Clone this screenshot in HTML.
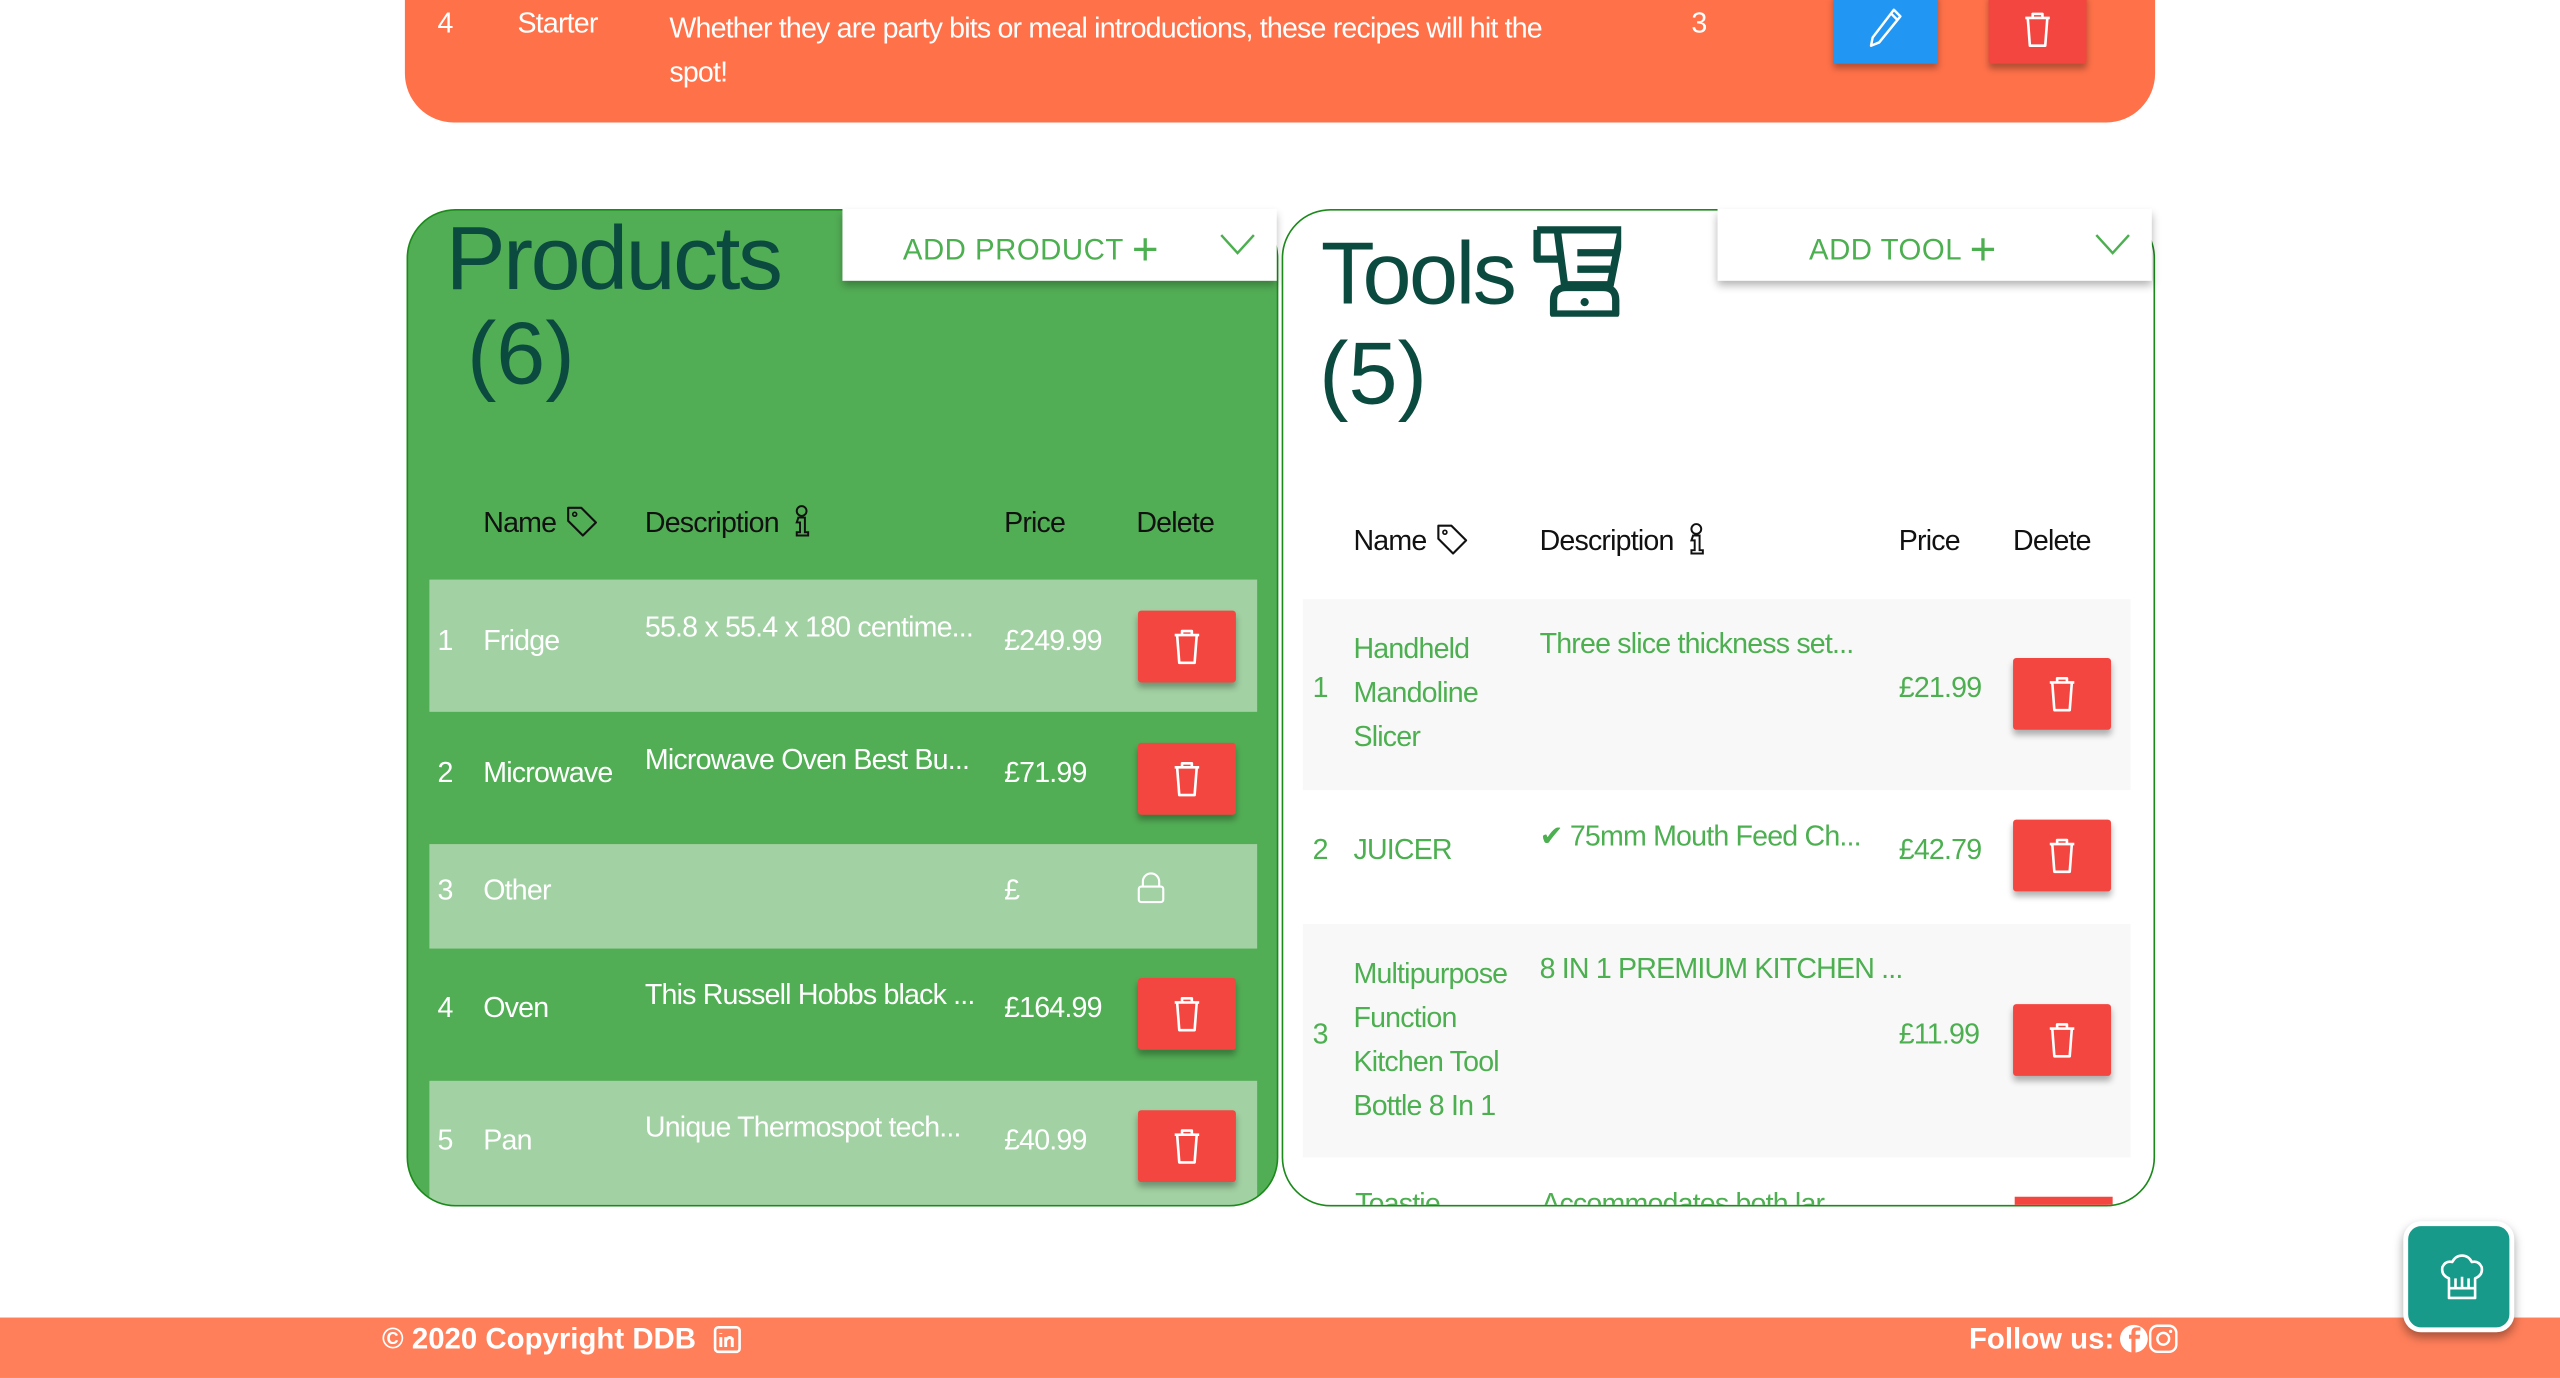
<!DOCTYPE html>
<html><head><meta charset="utf-8">
<style>
html,body{margin:0;padding:0;width:2560px;height:1378px;overflow:hidden;background:#fff;}
#w{position:absolute;left:0;top:0;width:1568px;height:844px;transform:scale(1.632653);transform-origin:0 0;font-family:"Liberation Sans",sans-serif;}
.a{position:absolute;white-space:nowrap;}
.t{font-size:17.5px;letter-spacing:-0.5px;}
.wt{color:#fff}
.gt{color:#4caf50}
.dk{color:#111}
.btn{position:absolute;width:60px;height:44px;background:#f44640;border-radius:2px;box-shadow:0 3px 4px rgba(0,0,0,.3);}
.btn svg{position:absolute;left:20px;top:10px}
.row{position:absolute;}
.dd{position:absolute;background:#fff;box-shadow:0 3px 5px rgba(0,0,0,.3);height:44px;}
.dd .l{position:absolute;top:15px;color:#4caf50;font-size:18px;letter-spacing:.3px}
</style></head><body><div id="w">
<svg width="0" height="0" style="position:absolute"><defs>
<symbol id="bin" viewBox="0 0 20 24"><path d="M2.5 5h15M7 5V2.5h6V5M4 5l1.3 17h9.4L16 5" fill="none" stroke="#fff" stroke-width="1.6" stroke-linejoin="round"/></symbol>
</defs></svg>

<div class="a" style="left:248px;top:-40px;width:1072px;height:115px;background:#ff7149;border-radius:0 0 30px 30px"></div>
<div class="a t wt" style="left:268px;top:4px">4</div>
<div class="a t wt" style="left:317px;top:4px">Starter</div>
<div class="a t wt" style="left:410px;top:4px;white-space:normal;width:560px;line-height:27px">Whether they are party bits or meal introductions, these recipes will hit the spot!</div>
<div class="a t wt" style="left:1036px;top:4px">3</div>
<div class="a" style="left:1123px;top:-4px;width:64px;height:43px;background:#2196f3;box-shadow:0 3px 4px rgba(0,0,0,.3)"><svg style="position:absolute;left:20px;top:8px" width="24" height="26" viewBox="0 0 24 26"><path d="M17 2l4 4L8 22l-5 2 1-5z M15 4l4 4" fill="none" stroke="#fff" stroke-width="1.5" stroke-linejoin="round"/></svg></div>
<div class="btn" style="left:1218px;top:-4px;height:43px"><svg width="20" height="24"><use href="#bin"/></svg></div>

<div class="a" style="left:249px;top:128px;width:532px;height:609px;background:#52ae55;border:1px solid #1b8a1b;border-radius:30px;overflow:hidden">
 <div class="row" style="left:13px;top:226px;width:507px;height:81px;background:#a2d1a3"></div>
 <div class="row" style="left:13px;top:388px;width:507px;height:64px;background:#a2d1a3"></div>
 <div class="row" style="left:13px;top:533px;width:507px;height:90px;background:#a2d1a3"></div>
</div>
<div class="a" style="left:273px;top:126px;font-size:55px;color:#0b4a3f;letter-spacing:-1.5px">Products</div>
<div class="a" style="left:286px;top:186px;font-size:54px;color:#0b4a3f">(6)</div>
<div class="dd" style="left:516px;top:128px;width:266px"><span class="l" style="left:37px">ADD PRODUCT <span style="font-size:28px;position:relative;top:3px;line-height:0">+</span></span>
<svg style="position:absolute;left:231px;top:15px" width="22" height="14" viewBox="0 0 22 14"><path d="M1 1l10 11L21 1" fill="none" stroke="#4caf50" stroke-width="1.5"/></svg></div>

<div class="a t dk" style="left:296px;top:310px">Name</div>
<svg class="a" style="left:346px;top:309px" width="21" height="21" viewBox="0 0 21 21"><path d="M2 2h8l9 9-8 8-9-9z" fill="none" stroke="#111" stroke-width="1.3" stroke-linejoin="round"/><circle cx="6" cy="6" r="1.2" fill="none" stroke="#111"/></svg>
<div class="a t dk" style="left:395px;top:310px">Description</div>
<svg class="a" style="left:486px;top:309px" width="10" height="20" viewBox="0 0 10 20"><circle cx="5" cy="4" r="3" fill="none" stroke="#111" stroke-width="1.2"/><path d="M3 8h4v9h2v2H2v-2h2v-6H2z" fill="none" stroke="#111" stroke-width="1.2"/></svg>
<div class="a t dk" style="left:615px;top:310px">Price</div>
<div class="a t dk" style="left:696px;top:310px">Delete</div>

<div class="a t wt" style="left:268px;top:382px">1</div><div class="a t wt" style="left:296px;top:382px">Fridge</div><div class="a t wt" style="left:395px;top:374px">55.8 x 55.4 x 180 centime...</div><div class="a t wt" style="left:615px;top:382px">£249.99</div>
<div class="btn" style="left:697px;top:374px"><svg width="20" height="24"><use href="#bin"/></svg></div>
<div class="a t wt" style="left:268px;top:463px">2</div><div class="a t wt" style="left:296px;top:463px">Microwave</div><div class="a t wt" style="left:395px;top:455px">Microwave Oven Best Bu...</div><div class="a t wt" style="left:615px;top:463px">£71.99</div>
<div class="btn" style="left:697px;top:455px"><svg width="20" height="24"><use href="#bin"/></svg></div>
<div class="a t wt" style="left:268px;top:535px">3</div><div class="a t wt" style="left:296px;top:535px">Other</div><div class="a t wt" style="left:615px;top:535px">£</div>
<svg class="a" style="left:696px;top:534px" width="18" height="20" viewBox="0 0 18 20"><path d="M4 9V6a5 5 0 0 1 10 0v3" fill="none" stroke="#fff" stroke-width="1.3"/><rect x="1.5" y="9" width="15" height="9.5" rx="1.5" fill="none" stroke="#fff" stroke-width="1.3"/></svg>
<div class="a t wt" style="left:268px;top:607px">4</div><div class="a t wt" style="left:296px;top:607px">Oven</div><div class="a t wt" style="left:395px;top:599px">This Russell Hobbs black ...</div><div class="a t wt" style="left:615px;top:607px">£164.99</div>
<div class="btn" style="left:697px;top:599px"><svg width="20" height="24"><use href="#bin"/></svg></div>
<div class="a t wt" style="left:268px;top:688px">5</div><div class="a t wt" style="left:296px;top:688px">Pan</div><div class="a t wt" style="left:395px;top:680px">Unique Thermospot tech...</div><div class="a t wt" style="left:615px;top:688px">£40.99</div>
<div class="btn" style="left:697px;top:680px"><svg width="20" height="24"><use href="#bin"/></svg></div>

<div class="a" style="left:785px;top:128px;width:533px;height:609px;background:#fff;border:1px solid #1b8a1b;border-radius:30px;overflow:hidden">
 <div class="row" style="left:12px;top:238px;width:507px;height:117px;background:#f8f8f8"></div>
 <div class="row" style="left:12px;top:437px;width:507px;height:143px;background:#f8f8f8"></div>
 <div class="a t gt" style="left:44px;top:598px">Toastie</div>
 <div class="a t gt" style="left:158px;top:598px">Accommodates both lar...</div>
 <div class="a" style="left:448px;top:604px;width:60px;height:40px;background:#f44640"></div>
</div>
<div class="a" style="left:809px;top:137px;font-size:54px;color:#0b4a3f;letter-spacing:-1.5px">Tools</div>
<svg class="a" style="left:937px;top:138px" width="56" height="56" viewBox="0 0 100 100"><path d="M8 5h92l-12 60H38L30 5" fill="none" stroke="#0b4a3f" stroke-width="8" stroke-linejoin="round"/><path d="M8 5v32h26" fill="none" stroke="#0b4a3f" stroke-width="8" stroke-linejoin="round"/><path d="M52 30h40M52 48h36" stroke="#0b4a3f" stroke-width="8"/><path d="M26 97V82q0-14 14-14h40q14 0 14 14v15z" fill="none" stroke="#0b4a3f" stroke-width="8" stroke-linejoin="round"/><circle cx="60" cy="84" r="4.5" fill="#0b4a3f"/></svg>
<div class="a" style="left:808px;top:198px;font-size:54px;color:#0b4a3f">(5)</div>
<div class="dd" style="left:1052px;top:128px;width:266px"><span class="l" style="left:56px">ADD TOOL <span style="font-size:28px;position:relative;top:3px;line-height:0">+</span></span>
<svg style="position:absolute;left:231px;top:15px" width="22" height="14" viewBox="0 0 22 14"><path d="M1 1l10 11L21 1" fill="none" stroke="#4caf50" stroke-width="1.5"/></svg></div>

<div class="a t dk" style="left:829px;top:321px">Name</div>
<svg class="a" style="left:879px;top:320px" width="21" height="21" viewBox="0 0 21 21"><path d="M2 2h8l9 9-8 8-9-9z" fill="none" stroke="#111" stroke-width="1.3" stroke-linejoin="round"/><circle cx="6" cy="6" r="1.2" fill="none" stroke="#111"/></svg>
<div class="a t dk" style="left:943px;top:321px">Description</div>
<svg class="a" style="left:1034px;top:320px" width="10" height="20" viewBox="0 0 10 20"><circle cx="5" cy="4" r="3" fill="none" stroke="#111" stroke-width="1.2"/><path d="M3 8h4v9h2v2H2v-2h2v-6H2z" fill="none" stroke="#111" stroke-width="1.2"/></svg>
<div class="a t dk" style="left:1163px;top:321px">Price</div>
<div class="a t dk" style="left:1233px;top:321px">Delete</div>

<div class="a t gt" style="left:804px;top:411px">1</div>
<div class="a t gt" style="left:829px;top:384px;line-height:27px">Handheld<br>Mandoline<br>Slicer</div>
<div class="a t gt" style="left:943px;top:384px">Three slice thickness set...</div>
<div class="a t gt" style="left:1163px;top:411px">£21.99</div>
<div class="btn" style="left:1233px;top:403px"><svg width="20" height="24"><use href="#bin"/></svg></div>

<div class="a t gt" style="left:804px;top:510px">2</div>
<div class="a t gt" style="left:829px;top:510px">JUICER</div>
<div class="a t gt" style="left:943px;top:502px">✔ 75mm Mouth Feed Ch...</div>
<div class="a t gt" style="left:1163px;top:510px">£42.79</div>
<div class="btn" style="left:1233px;top:502px"><svg width="20" height="24"><use href="#bin"/></svg></div>

<div class="a t gt" style="left:804px;top:623px">3</div>
<div class="a t gt" style="left:829px;top:583px;line-height:27px">Multipurpose<br>Function<br>Kitchen Tool<br>Bottle 8 In 1</div>
<div class="a t gt" style="left:943px;top:583px">8 IN 1 PREMIUM KITCHEN ...</div>
<div class="a t gt" style="left:1163px;top:623px">£11.99</div>
<div class="btn" style="left:1233px;top:615px"><svg width="20" height="24"><use href="#bin"/></svg></div>

<div class="a" style="left:0;top:807px;width:1568px;height:37px;background:#ff7f5a"></div>
<div class="a" style="left:234px;top:810px;font-size:18px;font-weight:bold;color:#fff">© 2020 Copyright DDB</div>
<svg class="a" style="left:437px;top:812px" width="17" height="17" viewBox="0 0 17 17"><rect x="1" y="1" width="15" height="15" rx="2" fill="none" stroke="#fff" stroke-width="1.6"/><path d="M4.5 7v6M4.5 4.5v.5M7.5 13V7M7.5 9q2-3 4-1v5" fill="none" stroke="#fff" stroke-width="1.8"/></svg>
<div class="a" style="left:1206px;top:810px;font-size:18px;font-weight:bold;color:#fff">Follow us:</div>
<svg class="a" style="left:1298px;top:811px" width="36" height="18" viewBox="0 0 36 18"><circle cx="9" cy="9" r="8.5" fill="#fff"/><path d="M10 18V9h2.5l.4-2.5H10V5q0-1 1-1h2V2h-2.5Q7.5 2 7.5 5v1.5H6V9h1.5v9z" fill="#ff7f5a"/><rect x="19" y="1" width="16" height="16" rx="4.5" fill="none" stroke="#fff" stroke-width="1.5"/><circle cx="27" cy="9" r="3.6" fill="none" stroke="#fff" stroke-width="1.5"/><circle cx="31.5" cy="4.5" r="1" fill="#fff"/></svg>

<div class="a" style="left:1472px;top:748px;width:62px;height:62px;background:#179a8a;border:3px solid #fff;border-radius:11px;box-shadow:0 3px 6px rgba(0,0,0,.35)">
<svg style="position:absolute;left:18px;top:17px" width="30" height="30" viewBox="0 0 30 30"><path d="M7 27h16v-6H7zM7 21v-6Q2 13 3 8q2-4 6-3 2-4 6-4t6 4q4-1 6 3 1 5-4 7v6M11 21v-6M15 21v-7M19 21v-6" fill="none" stroke="#fff" stroke-width="1.6" stroke-linejoin="round"/></svg></div>
</div></body></html>
